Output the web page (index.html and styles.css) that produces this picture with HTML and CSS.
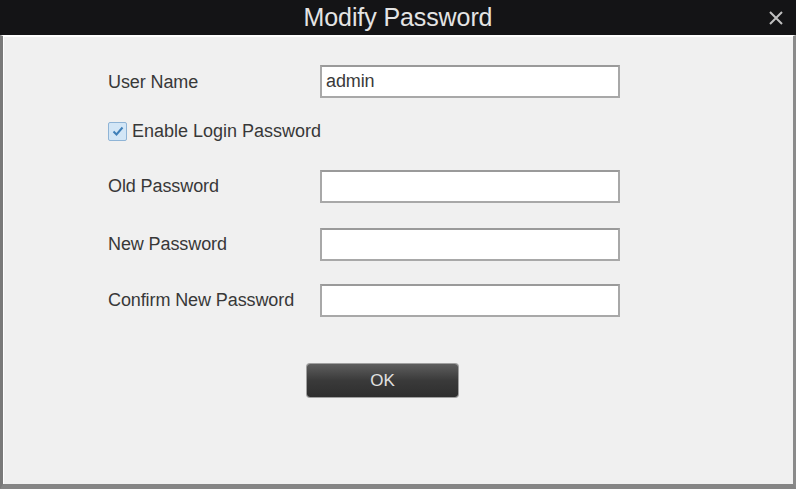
FILE: index.html
```html
<!DOCTYPE html>
<html>
<head>
<meta charset="utf-8">
<link rel="stylesheet" href="styles.css">
</head>
<body>
<div class="dialog">
  <div class="titlebar">
    <span class="title">Modify Password</span>
    <span class="close">
      <svg width="16" height="16" viewBox="0 0 16 16"><path d="M2 2 L14 14 M14 2 L2 14" stroke="#c0c0c0" stroke-width="2" fill="none"/></svg>
    </span>
  </div>
  <div class="content">
    <div class="row first">
      <span class="label">User Name</span>
      <div class="input">admin</div>
    </div>
    <div class="check-row">
      <span class="checkbox">
        <svg width="14" height="14" viewBox="0 0 14 14"><path d="M2.5 7.5 L5.5 10.5 L11.5 3.5" stroke="#3f7fb8" stroke-width="2" fill="none"/></svg>
      </span>
      <span class="check-label">Enable Login Password</span>
    </div>
    <div class="row pw1">
      <span class="label">Old Password</span>
      <div class="input"></div>
    </div>
    <div class="row pw2">
      <span class="label">New Password</span>
      <div class="input"></div>
    </div>
    <div class="row pw3">
      <span class="label">Confirm New Password</span>
      <div class="input"></div>
    </div>
    <div class="actions">
      <div class="btn">OK</div>
    </div>
  </div>
</div>
</body>
</html>
```

FILE: styles.css
```css
html, body {
  margin: 0;
  padding: 0;
  width: 796px;
  height: 489px;
  overflow: hidden;
  background: #141416;
  font-family: "Liberation Sans", Arial, sans-serif;
}
.dialog {
  display: flex;
  flex-direction: column;
  width: 796px;
  height: 489px;
}
.titlebar {
  height: 35px;
  background: #141416;
  display: flex;
  align-items: center;
  justify-content: center;
  position: relative;
  flex-shrink: 0;
}
.title {
  color: #e4e4e4;
  font-family: "Liberation Sans", Arial, sans-serif;
  font-size: 25px;
  letter-spacing: -0.1px;
}
.close {
  position: absolute;
  right: 12px;
  top: 10px;
  width: 16px;
  height: 16px;
  display: flex;
}
.content {
  flex: 1;
  background: #f0f0f0;
  border-left: 3px solid #7a7a7a;
  border-right: 3px solid #8a8a8a;
  border-bottom: 5px solid #858585;
  border-top: 1px solid #ffffff;
  box-shadow: inset 1px 1px 0 #ffffff;
  display: flex;
  flex-direction: column;
  padding-left: 105px;
}
.row {
  display: flex;
  align-items: center;
  height: 33px;
}
.row.first { margin-top: 29px; }
.row.pw1 { margin-top: 30px; }
.row.pw2 { margin-top: 25px; }
.row.pw3 { margin-top: 23px; }
.label {
  width: 212px;
  font-size: 18px;
  color: #383838;
  letter-spacing: -0.1px;
}
.row.first .label { margin-top: 2px; }
.input {
  width: 292px;
  height: 29px;
  border: 2px solid #a8a8a8;
  border-top-color: #9a9a9a;
  background: #ffffff;
  font-size: 18px;
  color: #3a3a3a;
  display: flex;
  align-items: center;
  padding-left: 4px;
  box-sizing: content-box;
  letter-spacing: -0.1px;
}
.check-row {
  display: flex;
  align-items: center;
  margin-top: 24px;
  height: 18px;
}
.checkbox {
  width: 17px;
  height: 17px;
  border: 1px solid #8fb4d6;
  background: #d3e6f6;
  border-radius: 2px;
  display: flex;
  align-items: center;
  justify-content: center;
}
.check-label {
  margin-left: 5px;
  font-size: 18px;
  color: #383838;
  letter-spacing: 0px;
}
.actions {
  display: flex;
  margin-top: 47px;
  padding-left: 199px;
}
.btn {
  width: 151px;
  height: 33px;
  border-radius: 3px;
  background: linear-gradient(#5e5e5e, #3a3a3a 50%, #2e2e2e);
  box-shadow: 0 0 0 1px #a0a0a0;
  color: #e0e0e0;
  font-size: 17px;
  display: flex;
  align-items: center;
  justify-content: center;
}
```
